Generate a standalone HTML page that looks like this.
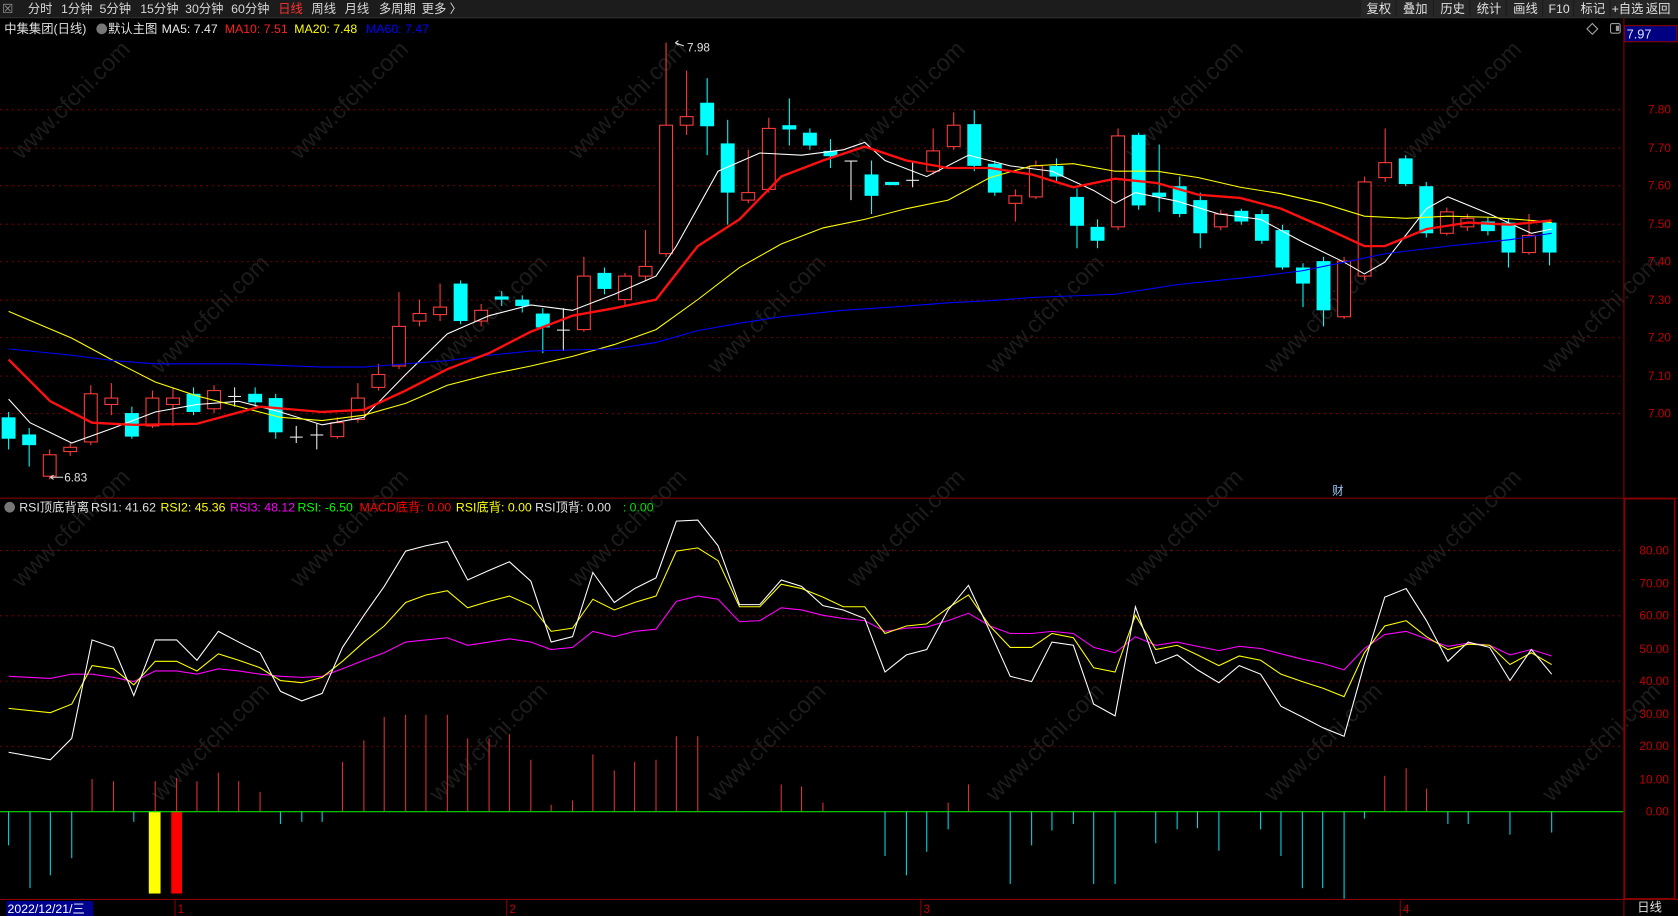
<!DOCTYPE html>
<html><head><meta charset="utf-8">
<style>
html,body{margin:0;padding:0;background:#000;overflow:hidden}
svg{display:block}
text{font-family:"Liberation Sans","Noto Sans CJK SC",sans-serif}
</style></head><body>
<svg id="s" width="1678" height="916" viewBox="0 0 1568 856" xmlns="http://www.w3.org/2000/svg">
<rect width="1568" height="856" fill="#000"/>
<g id="wm" fill="#1c1c1c" font-size="22"></g>
<rect x="0" y="0" width="1568" height="16" fill="#1c1c1c"/>
<line x1="0" y1="16.5" x2="1568" y2="16.5" stroke="#333"/>
<g font-size="11.5" fill="#d8d8d8">
<text x="2" y="12" fill="#999">☒</text>
<text x="26" y="12">分时</text><text x="57" y="12">1分钟</text><text x="93" y="12">5分钟</text>
<text x="131" y="12">15分钟</text><text x="173" y="12">30分钟</text><text x="216" y="12">60分钟</text>
<text x="260" y="12" fill="#ff3232">日线</text><text x="291" y="12">周线</text><text x="322" y="12">月线</text>
<text x="354" y="12">多周期</text><text x="394" y="12">更多 〉</text>
</g>
<g fill="#262626"><rect x="1272" y="0" width="32" height="16"/><rect x="1305" y="0" width="34" height="16"/><rect x="1340" y="0" width="33" height="16"/><rect x="1374" y="0" width="33" height="16"/><rect x="1408" y="0" width="33" height="16"/><rect x="1442" y="0" width="28" height="16"/><rect x="1471" y="0" width="33" height="16"/><rect x="1505" y="0" width="27" height="16"/><rect x="1533" y="0" width="35" height="16"/></g>
<g font-size="11.5" fill="#e0e0e0">
<text x="1277" y="12">复权</text><text x="1311" y="12">叠加</text><text x="1346" y="12">历史</text><text x="1380" y="12">统计</text><text x="1414" y="12">画线</text><text x="1447" y="12">F10</text><text x="1477" y="12">标记</text><text x="1506" y="12">+自选</text><text x="1538" y="12">返回</text>
</g>
<g font-size="11.5">
<text x="4" y="31" fill="#e0e0e0">中集集团(日线)</text>
<circle cx="95" cy="27" r="5" fill="#777"/>
<text x="101" y="31" fill="#e0e0e0">默认主图</text>
<text x="151" y="31" fill="#e8e8e8">MA5: 7.47</text>
<text x="210" y="31" fill="#ff2020">MA10: 7.51</text>
<text x="275" y="31" fill="#ffff00">MA20: 7.48</text>
<text x="342" y="31" fill="#0000ff">MA60: 7.47</text>
</g>
<path d="M1488 22 l5 5 -5 5 -5 -5z" fill="none" stroke="#aaa"/>
<rect x="1505" y="22" width="9" height="9" rx="1.5" fill="none" stroke="#999"/><rect x="1510" y="24" width="3" height="5" fill="#999"/>
<!-- axes -->
<g stroke="#8b0000" stroke-width="1" fill="none">
<line x1="1517.5" y1="17" x2="1517.5" y2="856"/>
<line x1="0" y1="465.5" x2="1568" y2="465.5"/>
<line x1="0" y1="840.5" x2="1568" y2="840.5"/>
<rect x="1518" y="466" width="47" height="374" stroke-width="1.5"/>
</g>
<rect x="1518" y="24" width="49" height="15" fill="#000080" stroke="#8b0000"/>
<text x="1520" y="36" font-size="12" fill="#e0e0ff">7.97</text>
<g id="grid" stroke="#8b0000" stroke-dasharray="1.5,4" stroke-width="1"></g>
<g id="lab" font-size="11" fill="#c00000"></g>
<g id="bars"></g>
<rect x="139" y="758" width="11" height="77" fill="#ffff00"/>
<rect x="160" y="758" width="10" height="77" fill="#ff0000"/>
<line x1="0" y1="758.5" x2="1517" y2="758.5" stroke="#00e000"/>
<g id="candles"></g>
<g id="lines" fill="none"></g>
<text x="642" y="48" font-size="11" fill="#e0e0e0">7.98</text>
<path d="M631 40 l8 3 M631 40 l3 -2 M631 40 l3 2" stroke="#ddd" fill="none"/>
<text x="60" y="450" font-size="11" fill="#e0e0e0">6.83</text>
<path d="M47 446 h12 M47 446 l3 -2 M47 446 l3 2" stroke="#ddd" fill="none"/>
<text x="1245" y="462" font-size="10.5" fill="#9fd0ff">财</text>
<g font-size="11.5">
<circle cx="9" cy="474" r="5" fill="#777"/>
<text x="18" y="478" fill="#e0e0e0">RSI顶底背离</text>
<text x="85" y="478" fill="#e0e0e0">RSI1: 41.62</text>
<text x="150" y="478" fill="#ffff00">RSI2: 45.36</text>
<text x="215" y="478" fill="#ff00ff">RSI3: 48.12</text>
<text x="278" y="478" fill="#00ff00">RSI: -6.50</text>
<text x="336" y="478" fill="#ff0000">MACD底背: 0.00</text>
<text x="426" y="478" fill="#ffff00">RSI底背: 0.00</text>
<text x="500" y="478" fill="#e0e0e0">RSI顶背: 0.00</text>
<text x="582" y="478" fill="#00e000">: 0.00</text>
</g>
<rect x="6" y="842" width="81" height="14" fill="#000090"/>
<text x="7" y="853" font-size="11.5" fill="#fff">2022/12/21/三</text>
<g font-size="11" fill="#c00000"><text x="166" y="853">1</text><text x="476" y="853">2</text><text x="863" y="853">3</text><text x="1311" y="853">4</text></g>
<g stroke="#8b0000"><line x1="163.5" y1="841" x2="163.5" y2="856"/><line x1="473.5" y1="841" x2="473.5" y2="856"/><line x1="860.5" y1="841" x2="860.5" y2="856"/><line x1="1308.5" y1="841" x2="1308.5" y2="856"/></g>
<text x="1530" y="852" font-size="11.5" fill="#e0e0e0">日线</text>
</svg>
<script>
var NS="http://www.w3.org/2000/svg";
function el(p,t,a){var e=document.createElementNS(NS,t);for(var k in a)e.setAttribute(k,a[k]);document.getElementById(p).appendChild(e);return e;}
// watermarks
for(var r=0;r<4;r++)for(var c=0;c<7;c++){var x=20+c*260+(r%2)*130,y=150+r*200;var t=el("wm","text",{x:x,y:y,transform:"rotate(-45 "+x+" "+y+")"});t.textContent="www.cfchi.com";}
// grid
var pl=[["7.80",102],["7.70",138],["7.60",173],["7.50",209],["7.40",244],["7.30",280],["7.20",315],["7.10",351],["7.00",386]];
pl.forEach(function(p){el("grid","line",{x1:0,x2:1517,y1:p[1]+.5,y2:p[1]+.5});var t=el("lab","text",{x:1540,y:p[1]+4});t.textContent=p[0];});
var rl=[["80.00",514],["70.00",545],["60.00",575],["50.00",606],["40.00",636],["30.00",667],["20.00",697],["10.00",728],["0.00",758]];
rl.forEach(function(p,i){if(i%2==0)el("grid","line",{x1:0,x2:1517,y1:p[1]+.5,y2:p[1]+.5});var t=el("lab","text",{x:p[0].length>4?1532:1538,y:p[1]+4});t.textContent=p[0];});
// candles: type, top, bottom, wickTop, wickBot
var C=[["c",390,410,385,420],["c",406,416,400,436],["r",425,445,420,448],["r",418,422,414,426],["r",368,413,360,416],["r",372,378,358,388],["c",386,408,380,410],["r",372,398,365,400],["r",372,378,362,398],["c",368,385,362,388],["r",365,382,360,386],["w",370,370,362,380],["c",368,376,362,380],["c",372,404,368,410],["w",408,408,398,414],["w",406,406,396,420],["r",395,408,390,410],["r",372,392,358,395],["r",350,362,340,365],["r",305,342,273,345],["r",293,300,280,305],["r",287,294,265,300],["c",265,300,262,303],["r",290,300,284,305],["c",277,280,272,286],["c",280,286,276,292],["c",293,306,288,330],["w",308,308,288,328],["r",258,308,240,310],["c",255,270,250,275],["r",258,280,255,285],["r",249,258,215,262],["r",117,237,40,240],["r",109,117,66,126],["c",96,118,73,145],["c",134,180,112,210],["r",180,187,140,190],["r",120,177,110,180],["c",117,121,92,136],["c",124,136,120,140],["c",141,146,130,157],["w",150,150,150,187],["c",163,183,150,200],["c",170,173,170,173],["w",168,168,150,175],["r",141,160,120,163],["r",117,137,105,140],["c",116,155,103,160],["c",153,180,150,183],["r",183,190,177,207],["r",155,184,150,186],["c",155,165,148,170],["c",184,211,176,232],["c",212,225,205,232],["r",127,212,120,215],["c",126,192,124,196],["c",180,184,135,198],["c",174,200,165,203],["c",187,218,180,232],["r",200,212,196,215],["c",197,207,195,210],["c",200,225,196,228],["c",215,250,210,252],["c",250,265,246,287],["c",244,290,240,305],["r",244,296,240,298],["r",170,258,165,262],["r",152,166,120,170],["c",148,172,145,174],["c",174,218,170,222],["r",198,218,194,220],["r",204,212,200,216],["c",207,216,203,220],["c",208,236,204,250],["r",220,236,200,238],["c",208,236,206,248]];
var N=C.length,sp=(1448-8)/(N-1);
C.forEach(function(d,i){var x=8+i*sp;var col=d[0]=="r"?"#ff3c3c":d[0]=="c"?"#00ffff":"#f0f0f0";
el("candles","line",{x1:x,x2:x,y1:d[3],y2:d[4],stroke:col});
if(d[0]=="w"){el("candles","line",{x1:x-6,x2:x+6,y1:d[1]+.5,y2:d[1]+.5,stroke:col});}
else if(d[0]=="r"){el("candles","rect",{x:x-6,y:d[1],width:12,height:Math.max(d[2]-d[1],1),fill:"#000",stroke:col});}
else el("candles","rect",{x:x-6.5,y:d[1],width:13,height:Math.max(d[2]-d[1],2),fill:col});});
function pts(a){return a.join(" ");}
var L={
"#ffffff":[[8,373],[28,395],[67,414],[106,400],[145,385],[184,378],[223,375],[262,385],[301,397],[340,390],[379,350],[418,312],[457,295],[496,285],[535,290],[574,275],[613,258],[632,230],[671,160],[710,143],[749,145],[788,140],[808,133],[827,150],[866,165],[905,145],[944,155],[983,160],[1022,178],[1042,190],[1061,180],[1100,188],[1139,200],[1178,205],[1217,226],[1256,245],[1275,256],[1294,245],[1333,195],[1353,184],[1392,200],[1431,218],[1450,214]],
"#ffff00":[[8,291],[67,316],[106,337],[145,357],[184,370],[223,380],[262,390],[301,393],[340,388],[379,377],[418,360],[457,350],[496,342],[535,333],[574,322],[613,308],[652,280],[691,250],[730,228],[769,213],[808,205],[847,195],[886,187],[925,166],[964,155],[1003,153],[1042,160],[1081,160],[1120,166],[1159,175],[1197,181],[1236,190],[1275,202],[1314,204],[1353,202],[1392,203],[1431,206],[1450,208]],
"#0000ff":[[8,326],[67,332],[106,337],[145,340],[223,340],[301,343],[340,343],[418,337],[457,332],[496,328],[574,326],[613,320],[652,309],[691,302],[730,296],[788,290],[847,286],[886,283],[925,281],[964,278],[1042,275],[1100,266],[1178,258],[1217,253],[1256,245],[1295,237],[1353,230],[1411,224],[1450,218]]};
for(var k in L)el("lines","polyline",{points:pts(L[k]),stroke:k,"stroke-width":1});
el("lines","polyline",{points:pts([[8,336],[47,375],[86,395],[125,397],[184,396],[243,380],[301,385],[340,383],[379,365],[418,345],[457,330],[496,310],[535,295],[574,288],[613,280],[652,230],[691,205],[730,165],[769,150],[808,137],[847,150],[886,157],[925,157],[964,163],[1003,175],[1042,167],[1081,171],[1120,182],[1159,185],[1197,195],[1236,212],[1275,230],[1294,230],[1333,214],[1372,208],[1411,210],[1450,206]]),stroke:"#ff1010","stroke-width":2.2});
var xs=[8,47,67,86,106,125,145,165,184,204,223,243,262,282,301,320,340,359,379,398,418,437,457,476,496,515,535,554,574,593,613,632,652,671,691,710,730,749,769,788,808,827,847,866,886,905,925,944,964,983,1003,1022,1042,1061,1080,1100,1119,1139,1158,1178,1197,1217,1236,1256,1275,1294,1314,1333,1353,1372,1392,1411,1431,1450];
var w=[703,710,690,598,605,650,598,598,617,590,600,610,646,655,648,605,575,548,515,510,506,542,533,525,543,600,595,535,563,550,540,487,486,510,565,565,542,548,566,570,578,628,612,607,570,547,590,632,637,600,603,658,669,567,620,612,626,638,622,630,660,670,680,688,620,558,550,580,618,600,605,636,607,630];
var y=[662,666,658,622,625,640,618,618,627,611,617,624,636,638,633,618,600,585,563,556,552,568,562,557,566,590,587,560,570,563,557,515,512,524,567,567,546,550,558,567,567,592,585,583,568,556,585,605,605,592,596,624,628,575,607,603,612,622,613,617,630,637,643,651,610,585,580,595,607,602,603,621,610,621];
var m=[632,634,630,630,633,637,627,627,630,625,627,630,632,633,632,625,617,610,600,598,596,603,600,597,600,607,605,590,595,590,588,562,557,560,581,580,568,570,575,578,580,590,587,586,580,573,585,592,592,590,592,605,610,595,603,600,604,608,604,606,611,616,620,626,606,593,590,597,604,601,603,612,607,613];
function z(a){return xs.map(function(x,i){return x+","+a[i];}).join(" ");}
el("lines","polyline",{points:z(m),stroke:"#ff00ff"});
el("lines","polyline",{points:z(y),stroke:"#ffff00"});
el("lines","polyline",{points:z(w),stroke:"#ffffff"});
var up=[[86,728],[106,730],[145,730],[165,727],[184,730],[204,722],[223,730],[243,740],[320,712],[340,692],[359,670],[379,668],[398,668],[418,668],[437,690],[457,690],[476,686],[496,710],[515,752],[535,748],[554,705],[574,720],[593,712],[613,710],[632,688],[652,688],[730,733],[749,735],[769,750],[886,750],[905,733],[1294,725],[1314,718],[1333,737]];
up.forEach(function(p){el("bars","line",{x1:p[0],x2:p[0],y1:p[1],y2:758,stroke:"#e03030"});});
var dn=[[8,790],[28,830],[47,818],[67,802],[125,768],[262,770],[282,768],[301,768],[827,800],[847,818],[866,796],[886,775],[944,826],[964,790],[983,776],[1003,770],[1022,826],[1042,826],[1080,788],[1100,775],[1119,774],[1139,795],[1178,775],[1197,800],[1217,830],[1236,830],[1256,840],[1275,765],[1353,770],[1372,770],[1411,780],[1450,778]];
dn.forEach(function(p){el("bars","line",{x1:p[0],x2:p[0],y1:758,y2:p[1],stroke:"#00d8e8"});});
</script>
</body></html>
